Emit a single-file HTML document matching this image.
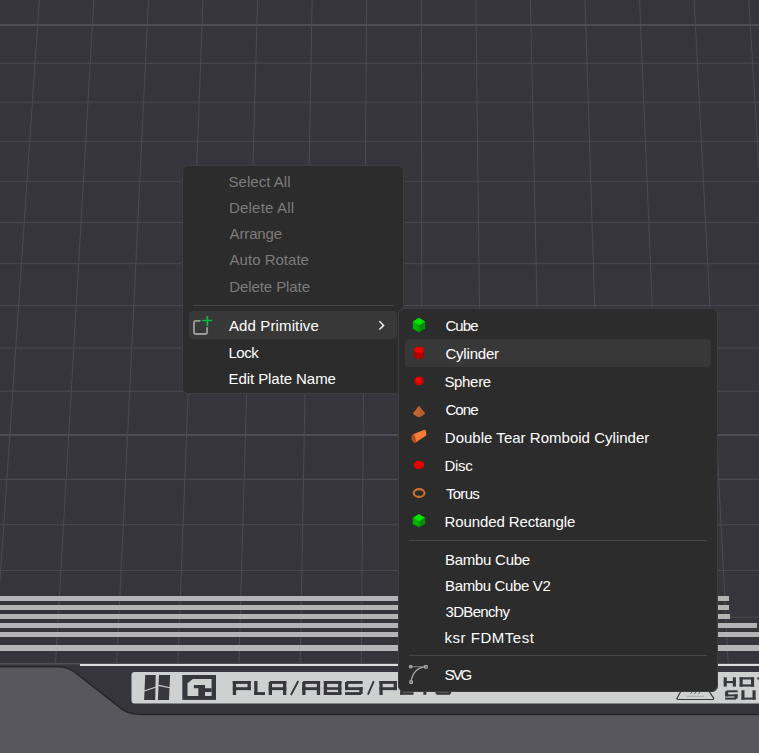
<!DOCTYPE html>
<html><head><meta charset="utf-8">
<style>
html,body{margin:0;padding:0;width:759px;height:753px;overflow:hidden;background:#36353b;}
body{position:relative;font-family:"Liberation Sans",sans-serif;}
svg.bg{position:absolute;left:0;top:0;}
.menu{position:absolute;background:#2c2c2c;border:1px solid #3e3e3e;border-radius:6px;box-sizing:border-box;}
.t{position:absolute;font-size:15px;line-height:20px;white-space:nowrap;}
.hl{position:absolute;background:#383838;border-radius:4px;}
.sep{position:absolute;height:1px;background:#464646;}
svg.ic{position:absolute;left:0;top:0;}
</style></head><body>
<svg class="bg" width="759" height="753" viewBox="0 0 759 753">
<rect x="0" y="0" width="759" height="753" fill="#36353b"/>
<line x1="39.30" y1="0" x2="-5.69" y2="664.50" stroke="#4b4b54" stroke-width="1"/>
<line x1="93.87" y1="0" x2="55.47" y2="664.50" stroke="#4b4b54" stroke-width="1"/>
<line x1="148.44" y1="0" x2="116.63" y2="664.50" stroke="#4b4b54" stroke-width="1"/>
<line x1="203.01" y1="0" x2="177.80" y2="664.50" stroke="#4b4b54" stroke-width="1"/>
<line x1="257.58" y1="0" x2="238.96" y2="664.50" stroke="#4b4b54" stroke-width="1"/>
<line x1="312.15" y1="0" x2="300.12" y2="664.50" stroke="#4b4b54" stroke-width="1"/>
<line x1="366.72" y1="0" x2="361.29" y2="664.50" stroke="#4b4b54" stroke-width="1"/>
<line x1="421.29" y1="0" x2="422.45" y2="664.50" stroke="#4b4b54" stroke-width="1"/>
<line x1="475.86" y1="0" x2="483.61" y2="664.50" stroke="#4b4b54" stroke-width="1"/>
<line x1="530.43" y1="0" x2="544.77" y2="664.50" stroke="#4b4b54" stroke-width="1"/>
<line x1="585.00" y1="0" x2="605.94" y2="664.50" stroke="#4b4b54" stroke-width="1"/>
<line x1="639.57" y1="0" x2="667.10" y2="664.50" stroke="#4b4b54" stroke-width="1"/>
<line x1="694.14" y1="0" x2="728.26" y2="664.50" stroke="#4b4b54" stroke-width="1"/>
<line x1="748.71" y1="0" x2="789.43" y2="664.50" stroke="#4b4b54" stroke-width="1"/>
<line x1="0" y1="24.93" x2="759" y2="24.93" stroke="#4c4c54" stroke-width="2"/>
<line x1="0" y1="63.30" x2="759" y2="63.30" stroke="#4a4a51" stroke-width="1"/>
<line x1="0" y1="102.22" x2="759" y2="102.22" stroke="#4a4a51" stroke-width="1"/>
<line x1="0" y1="141.71" x2="759" y2="141.71" stroke="#4a4a51" stroke-width="1"/>
<line x1="0" y1="181.77" x2="759" y2="181.77" stroke="#4a4a51" stroke-width="1"/>
<line x1="0" y1="222.42" x2="759" y2="222.42" stroke="#4a4a51" stroke-width="1"/>
<line x1="0" y1="263.68" x2="759" y2="263.68" stroke="#4a4a51" stroke-width="1"/>
<line x1="0" y1="305.55" x2="759" y2="305.55" stroke="#4a4a51" stroke-width="1"/>
<line x1="0" y1="348.06" x2="759" y2="348.06" stroke="#4a4a51" stroke-width="1"/>
<line x1="0" y1="391.21" x2="759" y2="391.21" stroke="#4a4a51" stroke-width="1"/>
<line x1="0" y1="435.02" x2="759" y2="435.02" stroke="#4c4c54" stroke-width="2"/>
<line x1="0" y1="479.50" x2="759" y2="479.50" stroke="#4a4a51" stroke-width="1"/>
<line x1="0" y1="524.68" x2="759" y2="524.68" stroke="#4a4a51" stroke-width="1"/>
<line x1="0" y1="570.56" x2="759" y2="570.56" stroke="#4a4a51" stroke-width="1"/>
<line x1="0" y1="617.17" x2="759" y2="617.17" stroke="#4a4a51" stroke-width="1"/>
<rect x="0" y="596" width="729" height="5" fill="#b4b4b4"/>
<rect x="0" y="605" width="729" height="5" fill="#b4b4b4"/>
<rect x="0" y="614" width="730" height="5" fill="#b4b4b4"/>
<rect x="0" y="623" width="757" height="5" fill="#b4b4b4"/>
<rect x="0" y="632" width="759" height="5" fill="#b4b4b4"/>
<rect x="0" y="645" width="759" height="6" fill="#b4b4b4"/>
<rect x="0" y="663" width="759" height="1.5" fill="#4e4e56"/>
<rect x="80" y="664" width="679" height="2" fill="#dcdede"/>
<path d="M-2,666.8 L58,666.8 Q67,666.8 74.5,672 L116.5,704.8 Q126,714.5 140,714.5 L761,714.5 L761,755 L-2,755 Z" fill="#58575d" stroke="#27272b" stroke-width="1.5"/>
<rect x="131.5" y="672" width="640" height="31.5" rx="3" fill="#cfd1d1"/>
<path d="M145.2,675 L155.7,675 L155.2,699.9 L144.1,699.9 Z M159,675 L170.1,675 L169,699.9 L157.9,699.9 Z" fill="#38383c"/>
<path d="M143.5,691.2 L156,687.1 M158.5,685.4 L170,687.8" stroke="#cfd1d1" stroke-width="1.1" fill="none"/>
<rect x="182.3" y="675" width="33.7" height="24.9" fill="#38383c"/>
<path d="M187.5,683.3 L192.8,679 L211.6,679 L211.6,696 L187.5,696 Z" fill="#cfd1d1"/>
<path d="M193.9,685 L205,685 L205,688.3 L211.6,688.3 L211.6,692 L205,692 L205,696 L198.3,696 L198.3,688.3 L193.9,688.3 Z" fill="#38383c"/>
<g fill="#38383c"><rect x="232.80" y="681.00" width="3.30" height="14.00"/><rect x="232.80" y="681.00" width="18.00" height="2.90"/><rect x="247.50" y="681.00" width="3.30" height="9.10"/><rect x="232.80" y="687.20" width="18.00" height="2.90"/><rect x="254.20" y="681.00" width="3.30" height="14.00"/><rect x="254.20" y="692.10" width="10.80" height="2.90"/><rect x="268.70" y="682.00" width="3.30" height="13.00"/><rect x="283.00" y="681.00" width="3.30" height="14.00"/><rect x="269.70" y="681.00" width="16.60" height="2.90"/><rect x="268.70" y="687.20" width="17.60" height="2.90"/><rect x="302.20" y="682.00" width="3.30" height="13.00"/><rect x="316.80" y="681.00" width="3.30" height="14.00"/><rect x="303.20" y="681.00" width="16.90" height="2.90"/><rect x="302.20" y="687.20" width="17.90" height="2.90"/><rect x="323.80" y="681.00" width="3.30" height="14.00"/><rect x="338.10" y="681.00" width="3.30" height="14.00"/><rect x="323.80" y="681.00" width="17.60" height="2.90"/><rect x="323.80" y="687.20" width="17.60" height="2.61"/><rect x="323.80" y="692.10" width="17.60" height="2.90"/><rect x="346.50" y="681.00" width="16.10" height="2.90"/><rect x="345.00" y="682.00" width="3.30" height="8.10"/><rect x="345.00" y="687.20" width="17.60" height="2.90"/><rect x="359.30" y="687.20" width="3.30" height="6.80"/><rect x="345.00" y="692.10" width="16.10" height="2.90"/><rect x="379.40" y="681.00" width="3.30" height="14.00"/><rect x="379.40" y="681.00" width="17.50" height="2.90"/><rect x="393.60" y="681.00" width="3.30" height="9.10"/><rect x="379.40" y="687.20" width="17.50" height="2.90"/><rect x="400.20" y="681.00" width="3.00" height="13.80"/><rect x="400.20" y="681.00" width="13.40" height="2.60"/><rect x="400.20" y="687.20" width="11.39" height="2.60"/><rect x="400.20" y="692.20" width="13.40" height="2.60"/><rect x="416.50" y="681.00" width="16.70" height="2.60"/><rect x="423.35" y="681.00" width="3.00" height="13.80"/><rect x="435.50" y="682.00" width="3.00" height="11.80"/><rect x="436.50" y="681.00" width="14.60" height="2.60"/><rect x="436.50" y="692.20" width="13.60" height="2.60"/><rect x="448.10" y="687.20" width="3.00" height="6.60"/><rect x="443.30" y="687.20" width="7.80" height="2.60"/><rect x="723.70" y="677.30" width="3.10" height="9.30"/><rect x="732.80" y="677.30" width="3.10" height="9.30"/><rect x="723.70" y="681.00" width="12.20" height="2.20"/><rect x="739.60" y="677.30" width="3.10" height="9.30"/><rect x="751.00" y="677.30" width="3.10" height="9.30"/><rect x="739.60" y="677.30" width="14.50" height="2.20"/><rect x="739.60" y="684.40" width="14.50" height="2.20"/><rect x="757.30" y="677.30" width="12.70" height="2.20"/><rect x="762.10" y="677.30" width="3.10" height="9.30"/><rect x="726.60" y="690.30" width="11.00" height="2.00"/><rect x="725.10" y="691.30" width="3.10" height="5.10"/><rect x="725.10" y="694.40" width="12.50" height="2.00"/><rect x="734.50" y="694.40" width="3.10" height="4.20"/><rect x="725.10" y="697.60" width="11.00" height="2.00"/><rect x="741.40" y="690.30" width="3.10" height="9.30"/><rect x="752.50" y="690.30" width="3.10" height="9.30"/><rect x="741.40" y="697.60" width="14.20" height="2.00"/></g>
<path d="M298.3,681 L290.9,695 M373.8,681.2 L367.9,694.6" stroke="#38383c" stroke-width="1.9"/>
<path d="M680.6,691.8 L676.8,698.8 L677.8,699.5 L713.2,699.5 L713.8,698.4 L709.4,691.8" fill="none" stroke="#3a3a3e" stroke-width="1.2"/>
<path d="M687.1,696.3 L703.9,696.3" stroke="#a4a6a6" stroke-width="0.9"/>
<path d="M690.5,694 L692,692 M694.5,694 L696,692 M698.5,694 L700,692" stroke="#55565a" stroke-width="0.9"/>
</svg>
<div class="menu" style="left:182px;top:165px;width:222px;height:229px;"></div>
<div class="hl" style="left:189px;top:311px;width:208px;height:28px;"></div>
<div class="sep" style="left:193px;top:305px;width:201px;"></div>
<div class="menu" style="left:398px;top:308px;width:320px;height:384px;"></div>
<div class="hl" style="left:405px;top:339px;width:306px;height:28px;"></div>
<div class="sep" style="left:409px;top:540px;width:298px;"></div>
<div class="sep" style="left:409px;top:655px;width:298px;"></div>
<div class="t" style="left:228.5px;top:172.1px;color:#7b7b7b;letter-spacing:0.03px">Select All</div><div class="t" style="left:229px;top:198.0px;color:#7b7b7b;letter-spacing:0.20px">Delete All</div><div class="t" style="left:229.6px;top:223.9px;color:#7b7b7b;letter-spacing:-0.15px">Arrange</div><div class="t" style="left:229.6px;top:249.8px;color:#7b7b7b;letter-spacing:0.01px">Auto Rotate</div><div class="t" style="left:229.3px;top:276.6px;color:#7b7b7b;letter-spacing:-0.09px">Delete Plate</div><div class="t" style="left:229px;top:315.7px;color:#ffffff;letter-spacing:0.12px">Add Primitive</div><div class="t" style="left:228.5px;top:342.6px;color:#ffffff;letter-spacing:-0.47px">Lock</div><div class="t" style="left:228.5px;top:368.7px;color:#ffffff;letter-spacing:-0.07px">Edit Plate Name</div>
<div class="t" style="left:445.4px;top:315.6px;color:#ffffff;letter-spacing:-0.90px">Cube</div><div class="t" style="left:445.4px;top:343.6px;color:#ffffff;letter-spacing:-0.19px">Cylinder</div><div class="t" style="left:444.4px;top:371.6px;color:#ffffff;letter-spacing:-0.32px">Sphere</div><div class="t" style="left:445.4px;top:399.6px;color:#ffffff;letter-spacing:-0.90px">Cone</div><div class="t" style="left:444.8px;top:427.6px;color:#ffffff;letter-spacing:0.02px">Double Tear Romboid Cylinder</div><div class="t" style="left:444.5px;top:455.6px;color:#ffffff;letter-spacing:-0.30px">Disc</div><div class="t" style="left:445.9px;top:483.6px;color:#ffffff;letter-spacing:-0.70px">Torus</div><div class="t" style="left:444.5px;top:511.6px;color:#ffffff;letter-spacing:-0.11px">Rounded Rectangle</div><div class="t" style="left:445px;top:550.3px;color:#ffffff;letter-spacing:-0.27px">Bambu Cube</div><div class="t" style="left:445px;top:575.8px;color:#ffffff;letter-spacing:-0.36px">Bambu Cube V2</div><div class="t" style="left:445.6px;top:601.7px;color:#ffffff;letter-spacing:-0.70px">3DBenchy</div><div class="t" style="left:444.6px;top:627.5px;color:#ffffff;letter-spacing:0.51px">ksr FDMTest</div><div class="t" style="left:444.6px;top:664.9px;color:#ffffff;letter-spacing:-2.00px">SVG</div>
<svg class="ic" width="759" height="753" viewBox="0 0 759 753">
<!-- add primitive icon -->
<path d="M200.4,320.9 L196,320.9 Q194,320.9 194,322.9 L194,332 Q194,334 196,334 L205.1,334 Q207.1,334 207.1,332 L207.1,327.3" fill="none" stroke="#9a9a9a" stroke-width="1.9"/>
<path d="M201.9,320.5 L212.1,320.5 M207.4,315.9 L207.4,325.9" stroke="#00c040" stroke-width="1.7"/>
<!-- chevron -->
<path d="M379.4,321.3 L383.6,325.4 L379.4,329.5" fill="none" stroke="#eeeeee" stroke-width="1.5"/>
<!-- cube -->
<path d="M419,317.7 L425.2,321.5 L419,325.5 L412.8,321.5 Z" fill="#00e400"/>
<path d="M412.8,321.5 L419,325.5 L419,332.2 L412.8,328.8 Z" fill="#00b400"/>
<path d="M425.2,321.5 L419,325.5 L419,332.2 L425.2,328.8 Z" fill="#009000"/>
<!-- cylinder -->
<path d="M414.2,349.5 L414.2,356.5 Q414.2,359 419,359 Q423.9,359 423.9,356.5 L423.9,349.5 Z" fill="#b00000"/>
<ellipse cx="419.05" cy="349.8" rx="4.85" ry="3" fill="#ee0000"/>
<!-- sphere -->
<circle cx="419" cy="380.9" r="4.5" fill="#dd0000"/>
<circle cx="418" cy="379.6" r="2.2" fill="#ff1010" opacity="0.6"/>
<!-- cone -->
<path d="M419,405.8 L425.2,413.6 L422,416 L419,417.3 L416,416 L412.8,413.6 Z" fill="#bd6632"/>
<path d="M419,405.8 L425.2,413.6 L422,416 L419,417.3 Z" fill="#a85a2c" opacity="0.5"/>
<!-- double tear -->
<path d="M413.7,434 L424.6,429.8 Q426.2,430 426.2,432 L426.2,435.6 L416,442.3 L414.4,442.9 L411.8,439.4 L411.8,435.9 Z" fill="#f87a36"/>
<path d="M411.8,435.9 L413.7,434 Q415.6,436 416,442.3 L414.4,442.9 L411.8,439.4 Z" fill="#b44c1c"/>
<!-- disc -->
<ellipse cx="419" cy="464.85" rx="5.3" ry="4.15" fill="#e60000"/>
<!-- torus -->
<ellipse cx="419.1" cy="493" rx="5.4" ry="3.9" fill="none" stroke="#d0702e" stroke-width="2.1"/>
<!-- rounded rect cube -->
<path d="M419,513.9 L425.2,517.7 L419,521.7 L412.8,517.7 Z" fill="#00e400"/>
<path d="M412.8,517.7 L419,521.7 L419,527.3 L412.8,524.1 Z" fill="#00b400"/>
<path d="M425.2,517.7 L419,521.7 L419,527.3 L425.2,524.1 Z" fill="#009000"/>
<!-- svg icon -->
<path d="M411,682 Q413,668 425.8,666.7" fill="none" stroke="#a8a8a8" stroke-width="1.3"/>
<path d="M410.7,666.7 L425.8,666.7" stroke="#909090" stroke-width="0.9"/>
<circle cx="410.7" cy="666.7" r="1.9" fill="#a0a0a0"/>
<rect x="424" y="665" width="3.8" height="3.8" rx="0.7" fill="#a4a4a4"/><rect x="425.3" y="666.3" width="1.3" height="1.3" fill="#555"/>
<rect x="409.2" y="680.2" width="3.8" height="3.8" rx="0.7" fill="#a4a4a4"/><rect x="410.5" y="681.5" width="1.3" height="1.3" fill="#555"/>
</svg>
</body></html>
